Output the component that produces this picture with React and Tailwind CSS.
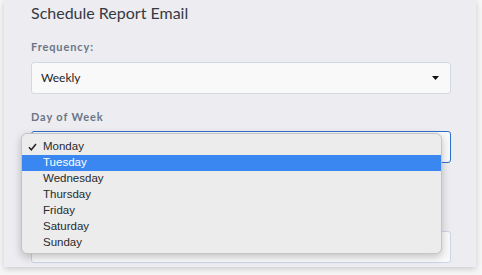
export default function App() {
  const days = ["Monday", "Tuesday", "Wednesday", "Thursday", "Friday", "Saturday", "Sunday"];
  return (
    <div className="w-[482px] h-[275px] bg-[#f6f6f7] overflow-hidden">
      <div className="relative ml-[4px] w-[472px] h-[267px] bg-[#ececf1] shadow-[0_2px_6px_rgba(0,0,0,0.18)] pl-[27px] pr-[25px] pt-[1px]" style={{ fontFamily: "Lato, 'Noto Sans', sans-serif" }}>
        <div className="text-[16px] leading-[24px] text-[#353a42]">Schedule Report Email</div>
        <div className="mt-[15px] text-[11px] leading-[14px] font-bold tracking-[0.08em] text-[#6b7586]">Frequency:</div>
        <div className="mt-[8px] h-[32px] rounded-[3px] border border-[#d3d9e2] bg-[#f9f9f9] flex items-center justify-between pl-[9px] pr-[11px]">
          <span className="text-[12px] text-[#1f1f1f]">Weekly</span>
          <svg width="7" height="4" viewBox="0 0 7 4"><path d="M0 0h7L3.5 4z" fill="#111" /></svg>
        </div>
        <div className="mt-[16px] text-[11px] leading-[14px] font-bold tracking-[0.08em] text-[#6b7586]">Day of Week</div>
        <div className="relative mt-[7px] h-[32px] rounded-[3px] border-[1.5px] border-[#2f6fca] bg-[#f9f9f9]">
          <div className="absolute left-[-11px] top-[1px] w-[421px] h-[121px] rounded-[6px] border border-[#c4c4c6] bg-[#ececed] shadow-[0_3px_8px_rgba(0,0,0,0.22)] pt-[5px] z-10" style={{ fontFamily: "'Liberation Sans', Arial, sans-serif" }}>
            {days.map((d, i) => (
              <div key={d} className={`relative h-[16px] flex items-center pl-[21px] text-[11.5px] ${i === 1 ? "bg-[#3a87f2] text-white" : "text-[#2a2a2a]"}`}>
                {i === 0 && (
                  <svg className="absolute left-[6px] top-[4px]" width="9" height="8" viewBox="0 0 9 8"><path d="M1 4.2 3.3 6.8 8 1" fill="none" stroke="#222" strokeWidth="1.5" /></svg>
                )}
                {d}
              </div>
            ))}
          </div>
        </div>
        <div className="mt-[68px] h-[32px] rounded-[3px] border border-[#c9d6e6] bg-[#f9f9f9]"></div>
      </div>
    </div>
  );
}
